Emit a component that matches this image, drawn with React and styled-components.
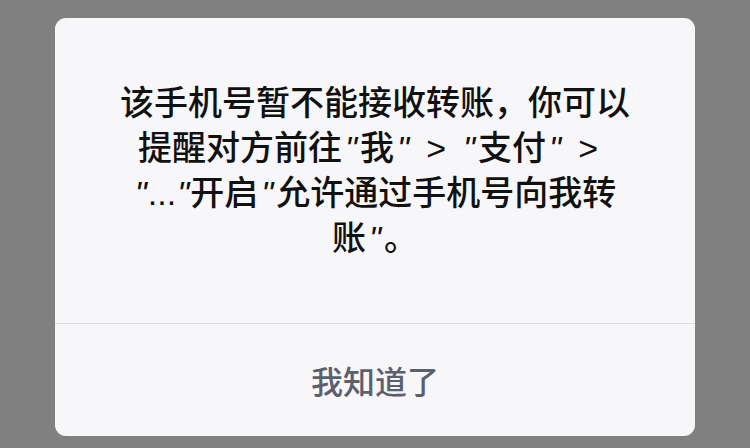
import React from "react";
import styled, { createGlobalStyle } from "styled-components";

const GlobalStyle = createGlobalStyle`
  html, body {
    margin: 0;
    padding: 0;
    background: #808080;
  }
  body {
    font-family: "Liberation Sans", "Noto Sans CJK SC", sans-serif;
  }
`;

const Overlay = styled.div`
  width: 750px;
  height: 448px;
  box-sizing: border-box;
  padding: 18px 55px 12px 55px;
  display: flex;
  justify-content: center;
  align-items: flex-start;
`;

const Dialog = styled.div`
  width: 640px;
  height: 418px;
  background: #f7f7f9;
  border-radius: 11px;
  display: flex;
  flex-direction: column;
  overflow: hidden;
`;

const Message = styled.div`
  flex: 1;
  display: flex;
  align-items: center;
  justify-content: center;
  padding: 0 30px;
  border-bottom: 1px solid #dfdfe2;
`;

const MessageText = styled.p`
  margin: 0;
  font-size: 34px;
  font-weight: 500;
  line-height: 45px;
  color: #111111;
  text-align: center;
  white-space: nowrap;
`;

// slanted straight quotes, as the system dialog renders them
const Quote = styled.span`
  font-style: italic;
  margin: 0 ${(p) => (p.$tight ? 1 : 3)}px;
`;

const Arrow = styled.span`
  margin: 0 14px;
`;

const ActionButton = styled.button`
  height: 112px;
  flex-shrink: 0;
  border: none;
  background: transparent;
  font-family: inherit;
  font-size: 32px;
  font-weight: 500;
  color: #5c5f6d;
  cursor: pointer;
`;

export default function App() {
  return (
    <>
      <GlobalStyle />
      <Overlay>
        <Dialog>
          <Message>
            <MessageText>
              该手机号暂不能接收转账，你可以
              <br />
              提醒对方前往<Quote>"</Quote>我<Quote>"</Quote>
              <Arrow>&gt;</Arrow>
              <Quote>"</Quote>支付<Quote>"</Quote>
              <Arrow>&gt;</Arrow>
              <br />
              <Quote $tight>"</Quote>...<Quote $tight>"</Quote>开启<Quote>"</Quote>允许通过手机号向我转
              <br />
              账<Quote>"</Quote>。
            </MessageText>
          </Message>
          <ActionButton type="button">我知道了</ActionButton>
        </Dialog>
      </Overlay>
    </>
  );
}
